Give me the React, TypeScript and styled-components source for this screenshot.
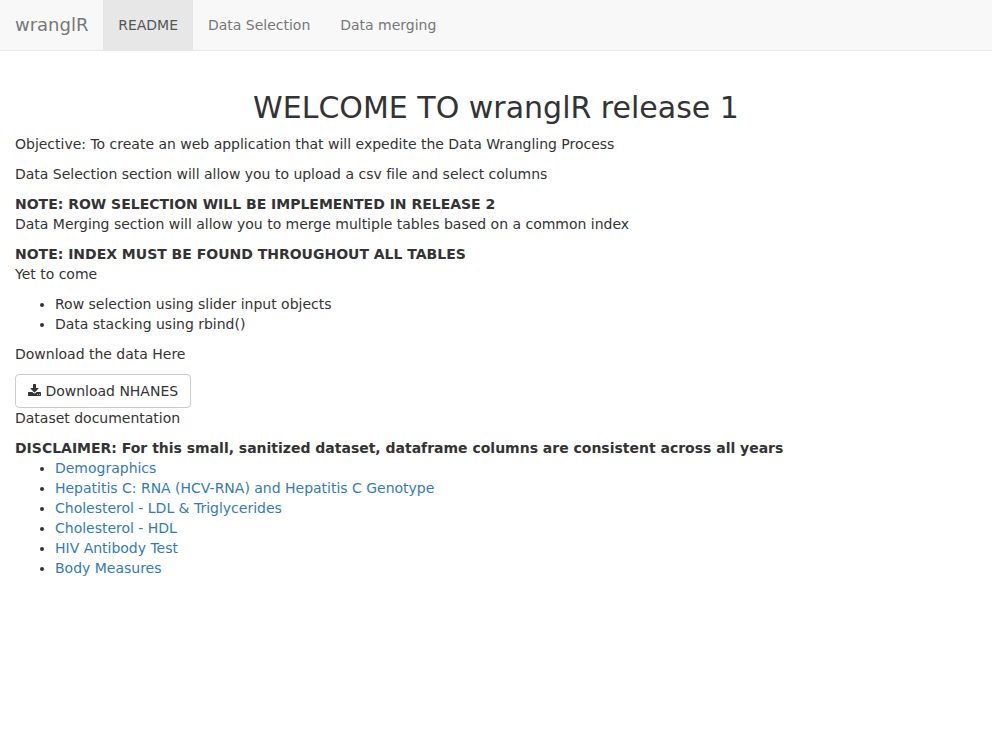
import React from "react";
import styled, { createGlobalStyle } from "styled-components";

const GlobalStyle = createGlobalStyle`
  *, *::before, *::after { box-sizing: border-box; }
  body {
    margin: 0;
    background: #fff;
    color: #333;
    font: 14px/20px "DejaVu Sans", sans-serif;
    letter-spacing: -0.01px;
  }
`;

const Navbar = styled.nav`
  display: flex;
  height: 51px;
  margin-bottom: 40px;
  background: #f8f8f8;
  border-bottom: 1px solid #e7e7e7;
`;

const Brand = styled.span`
  width: 103.2px;
  padding: 15px;
  font-size: 18px;
  line-height: 20px;
  color: #777;
`;

const Tab = styled.a<{ $active?: boolean }>`
  padding: 15px;
  color: ${(p) => (p.$active ? "#555" : "#777")};
  background: ${(p) => (p.$active ? "#e7e7e7" : "transparent")};
  text-decoration: none;
`;

const Content = styled.main`
  padding: 0 15px;
`;

const Title = styled.h2`
  margin: 0 0 10px;
  font-size: 30px;
  font-weight: 500;
  line-height: 33px;
  text-align: center;
  letter-spacing: 0;
`;

const Paragraph = styled.p`
  margin: 0 0 10px;
`;

const Note = styled.div`
  font-weight: 700;
`;

const List = styled.ul`
  margin: 0 0 10px;
  padding-left: 40px;
`;

const DocLink = styled.a`
  color: #337ab7;
  text-decoration: none;
`;

const DownloadButton = styled.a`
  display: inline-block;
  padding: 6px 12px;
  border: 1px solid #ccc;
  border-radius: 4px;
  background: #fff;
  color: #333;
  white-space: nowrap;
  vertical-align: middle;
  text-decoration: none;
`;

const Icon = styled.svg`
  display: inline-block;
  width: 13px;
  height: 14px;
  vertical-align: -2px;
  fill: currentColor;
`;

const DownloadIcon = () => (
  <Icon viewBox="0 0 1664 1792" aria-hidden="true">
    <path d="M1280 1344q0-26-19-45t-45-19-45 19-19 45 19 45 45 19 45-19 19-45zm256 0q0-26-19-45t-45-19-45 19-19 45 19 45 45 19 45-19 19-45zm128-224v320q0 40-28 68t-68 28H96q-40 0-68-28t-28-68v-320q0-40 28-68t68-28h465l135 136q58 56 136 56t136-56l136-136h464q40 0 68 28t28 68zm-325-569q17 41-14 70l-448 448q-18 19-45 19t-45-19L339 621q-31-29-14-70 17-39 59-39h256V64q0-26 19-45t45-19h256q26 0 45 19t19 45v448h256q42 0 59 39z" />
  </Icon>
);

const tabs = ["README", "Data Selection", "Data merging"];
const planned = ["Row selection using slider input objects", "Data stacking using rbind()"];
const documents = [
  "Demographics",
  "Hepatitis C: RNA (HCV-RNA) and Hepatitis C Genotype",
  "Cholesterol - LDL & Triglycerides",
  "Cholesterol - HDL",
  "HIV Antibody Test",
  "Body Measures",
];

export default function App() {
  return (
    <>
      <GlobalStyle />
      <Navbar>
        <Brand>wranglR</Brand>
        {tabs.map((tab, i) => (
          <Tab key={tab} $active={i === 0}>{tab}</Tab>
        ))}
      </Navbar>
      <Content>
        <Title>WELCOME TO wranglR release 1</Title>
        <Paragraph>Objective: To create an web application that will expedite the Data Wrangling Process</Paragraph>
        <Paragraph>Data Selection section will allow you to upload a csv file and select columns</Paragraph>
        <Note>NOTE: ROW SELECTION WILL BE IMPLEMENTED IN RELEASE 2</Note>
        <Paragraph>Data Merging section will allow you to merge multiple tables based on a common index</Paragraph>
        <Note>NOTE: INDEX MUST BE FOUND THROUGHOUT ALL TABLES</Note>
        <Paragraph>Yet to come</Paragraph>
        <List>
          {planned.map((item) => <li key={item}>{item}</li>)}
        </List>
        <Paragraph>Download the data Here</Paragraph>
        <DownloadButton><DownloadIcon /> Download NHANES</DownloadButton>
        <Paragraph>Dataset documentation</Paragraph>
        <Note>DISCLAIMER: For this small, sanitized dataset, dataframe columns are consistent across all years</Note>
        <List>
          {documents.map((doc) => <li key={doc}><DocLink>{doc}</DocLink></li>)}
        </List>
      </Content>
    </>
  );
}
